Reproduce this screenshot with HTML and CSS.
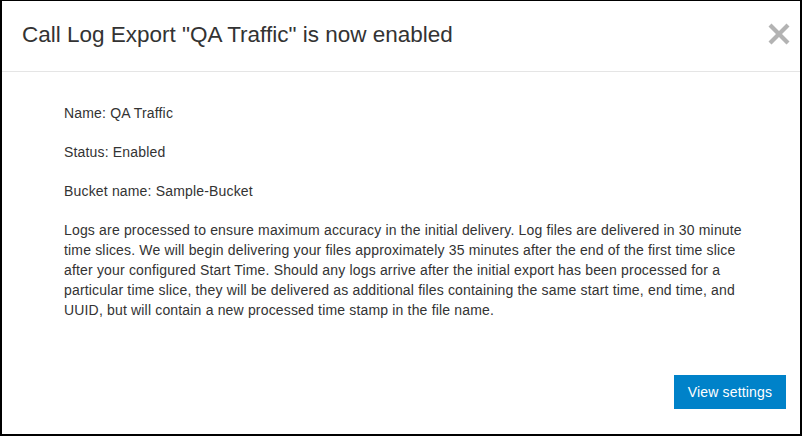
FILE: index.html
```html
<!DOCTYPE html>
<html>
<head>
<meta charset="utf-8">
<link rel="stylesheet" href="styles.css">
</head>
<body>
<div class="modal">
  <div class="modal-header">
    <h1 class="modal-title">Call Log Export "QA Traffic" is now enabled</h1>
    <button class="close" aria-label="Close">
      <svg width="22" height="22" viewBox="0 0 22 22"><path d="M3.5 0.5 L11 8 L18.5 0.5 L21.5 3.5 L14 11 L21.5 18.5 L18.5 21.5 L11 14 L3.5 21.5 L0.5 18.5 L8 11 L0.5 3.5 Z" fill="#b3b3b3"/></svg>
    </button>
  </div>
  <div class="modal-body">
    <p>Name: QA Traffic</p>
    <p>Status: Enabled</p>
    <p>Bucket name: Sample-Bucket</p>
    <p>Logs are processed to ensure maximum accuracy in the initial delivery. Log files are delivered in 30 minute time slices. We will begin delivering your files approximately 35 minutes after the end of the first time slice after your configured Start Time. Should any logs arrive after the initial export has been processed for a particular time slice, they will be delivered as additional files containing the same start time, end time, and UUID, but will contain a new processed time stamp in the file name.</p>
  </div>
  <div class="modal-footer">
    <button class="btn-primary">View settings</button>
  </div>
</div>
</body>
</html>
```
FILE: styles.css
```css
html, body {
  margin: 0;
  padding: 0;
  background: #fff;
}
body {
  font-family: "Liberation Sans", Arial, sans-serif;
  color: #333;
}
.modal {
  width: 802px;
  height: 436px;
  box-sizing: border-box;
  border: 2px solid #000;
  border-top-width: 1px;
  display: flex;
  flex-direction: column;
  background: #fff;
}
.modal-header {
  border-bottom: 1px solid #e5e5e5;
  display: flex;
  align-items: flex-start;
  padding: 22px 10px 0 20px;
  box-sizing: border-box;
  height: 71px;
}
.modal-title {
  margin: 0;
  font-size: 22.5px;
  line-height: 24px;
  font-weight: normal;
  color: #333;
}
.close {
  margin-left: auto;
  margin-top: 0;
  border: 0;
  background: none;
  padding: 0;
  width: 22px;
  height: 22px;
  display: block;
}
.close svg { display: block; }
.modal-body {
  flex: 1;
  padding: 31px 48px 0 62px;
  font-size: 14px;
  line-height: 20px;
  letter-spacing: 0.17px;
}
.modal-body p {
  margin: 0 0 19px;
}
.modal-footer {
  display: flex;
  justify-content: flex-end;
  padding: 0 14px 25px;
}
.btn-primary {
  font-family: "Liberation Sans", Arial, sans-serif;
  font-size: 14px;
  letter-spacing: 0.17px;
  color: #fff;
  background: #0082c9;
  border: 0;
  width: 112px;
  height: 34px;
  padding: 0;
}
```
